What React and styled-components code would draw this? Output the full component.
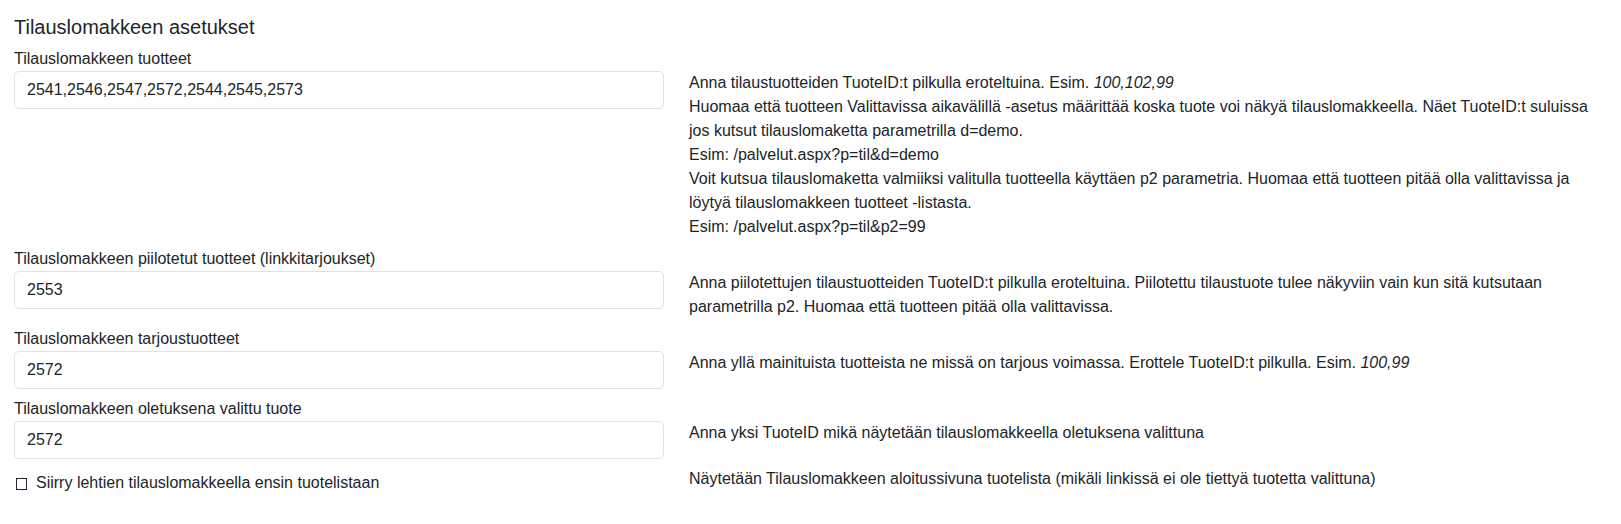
import React from 'react';
import styled, { createGlobalStyle } from 'styled-components';

const GlobalStyle = createGlobalStyle`
  body {
    margin: 0;
    background: #fff;
    font-family: 'Liberation Sans', Arial, sans-serif;
    font-size: 16px;
    line-height: 1.5;
    color: #212529;
  }
`;

const Page = styled.div`
  padding: 15px 14px 0 14px;
`;

const Title = styled.h5`
  margin: 0 0 8px 0;
  font-size: 20px;
  font-weight: 400;
  line-height: 1.2;
`;

const Label = styled.label`
  display: block;
  font-size: 16px;
  line-height: 24px;
`;

const Row = styled.div`
  display: grid;
  grid-template-columns: 650px 1fr;
  column-gap: 25px;
  align-items: start;
  margin-bottom: 8px;
`;

const Input = styled.input`
  box-sizing: border-box;
  width: 100%;
  height: 38px;
  padding: 6px 12px;
  border: 1px solid #dee2e6;
  border-radius: 5px;
  font-family: inherit;
  font-size: 16px;
  line-height: 24px;
  color: #212529;
  background: #fff;
  outline: none;
`;

const Help = styled.div`
  font-size: 16px;
  line-height: 24px;
  color: #212529;

  i {
    font-style: italic;
  }
`;

const CheckLabel = styled.label`
  display: flex;
  align-items: center;
  gap: 9px;
  margin-top: 4px;
  padding-left: 2px;
  line-height: 24px;
`;

const Box = styled.span`
  box-sizing: border-box;
  display: inline-block;
  width: 11px;
  height: 12px;
  border: 1px solid #2b2135;
  margin-top: 2px;
`;

const fields = [
  {
    label: 'Tilauslomakkeen tuotteet',
    value: '2541,2546,2547,2572,2544,2545,2573',
    help: (
      <>
        Anna tilaustuotteiden TuoteID:t pilkulla eroteltuina. Esim. <i>100,102,99</i>
        <br />
        Huomaa että tuotteen Valittavissa aikavälillä -asetus määrittää koska tuote voi näkyä
        tilauslomakkeella. Näet TuoteID:t suluissa jos kutsut tilauslomaketta parametrilla d=demo.
        <br />
        Esim: /palvelut.aspx?p=til&amp;d=demo
        <br />
        Voit kutsua tilauslomaketta valmiiksi valitulla tuotteella käyttäen p2 parametria. Huomaa
        että tuotteen pitää olla valittavissa ja löytyä tilauslomakkeen tuotteet -listasta.
        <br />
        Esim: /palvelut.aspx?p=til&amp;p2=99
      </>
    )
  },
  {
    label: 'Tilauslomakkeen piilotetut tuotteet (linkkitarjoukset)',
    value: '2553',
    help: (
      <>
        Anna piilotettujen tilaustuotteiden TuoteID:t pilkulla eroteltuina. Piilotettu tilaustuote
        tulee näkyviin vain kun sitä kutsutaan parametrilla p2. Huomaa että tuotteen pitää olla
        valittavissa.
      </>
    )
  },
  {
    label: 'Tilauslomakkeen tarjoustuotteet',
    value: '2572',
    help: (
      <>
        Anna yllä mainituista tuotteista ne missä on tarjous voimassa. Erottele TuoteID:t pilkulla.
        Esim. <i>100,99</i>
      </>
    )
  },
  {
    label: 'Tilauslomakkeen oletuksena valittu tuote',
    value: '2572',
    help: <>Anna yksi TuoteID mikä näytetään tilauslomakkeella oletuksena valittuna</>
  }
];

const App = () => {
  return (
    <Page>
      <GlobalStyle />
      <Title>Tilauslomakkeen asetukset</Title>
      {fields.map((f) => (
        <div key={f.label}>
          <Label>{f.label}</Label>
          <Row>
            <Input type="text" defaultValue={f.value} />
            <Help>{f.help}</Help>
          </Row>
        </div>
      ))}
      <Row>
        <CheckLabel>
          <Box />
          Siirry lehtien tilauslomakkeella ensin tuotelistaan
        </CheckLabel>
        <Help>Näytetään Tilauslomakkeen aloitussivuna tuotelista (mikäli linkissä ei ole tiettyä tuotetta valittuna)</Help>
      </Row>
    </Page>
  );
};

export default App;
